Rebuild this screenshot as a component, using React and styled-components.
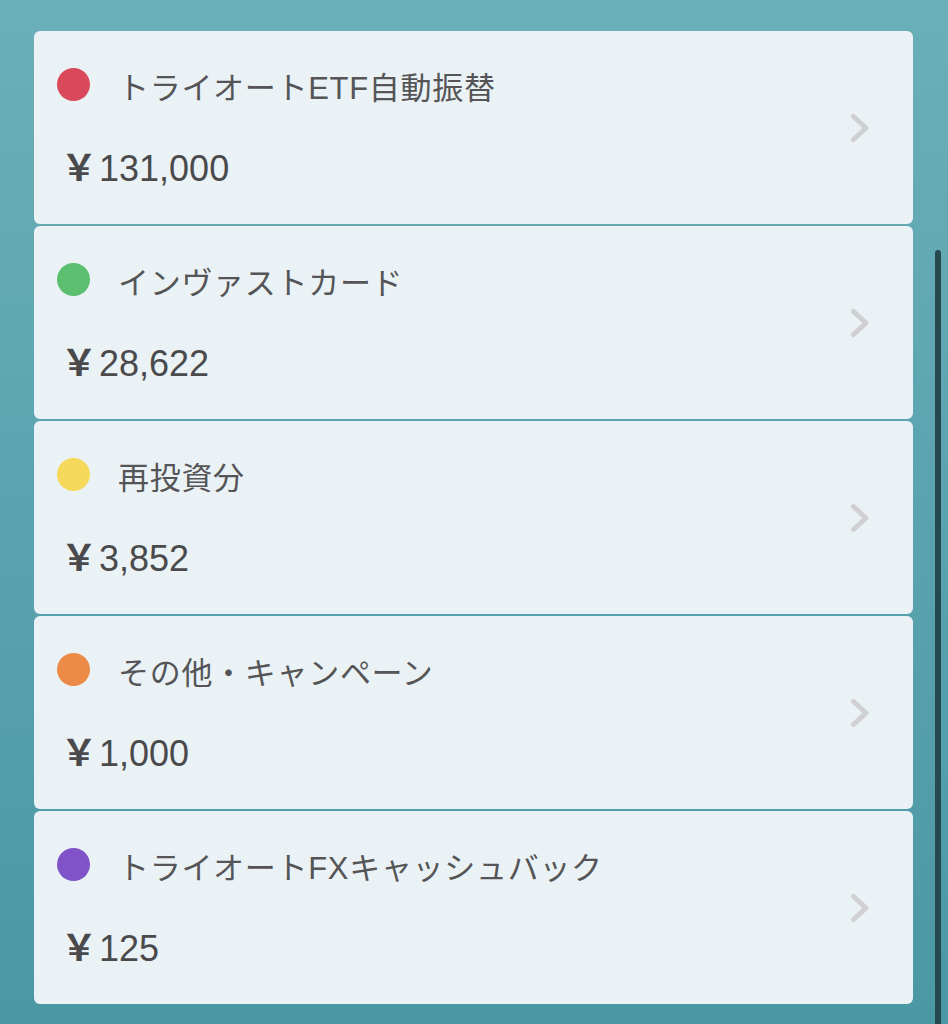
import styled, { createGlobalStyle } from "styled-components";

const GlobalStyle = createGlobalStyle`
  body {
    margin: 0;
    font-family: "Liberation Sans", "Noto Sans CJK JP", sans-serif;
  }
`

const items = [
  { name: "トライオートETF自動振替", amount: "131,000", color: "#d9485b" },
  { name: "インヴァストカード", amount: "28,622", color: "#5cbf6f" },
  { name: "再投資分", amount: "3,852", color: "#f6d85b" },
  { name: "その他・キャンペーン", amount: "1,000", color: "#ec8b47" },
  { name: "トライオートFXキャッシュバック", amount: "125", color: "#8153c8" },
]

const Chevron = () => (
  <svg width="20" height="30" viewBox="0 0 20 30">
    <polyline
      points="3.5,3.5 16,15 3.5,26.5"
      fill="none"
      stroke="#d0d0d2"
      strokeWidth="5"
      strokeLinecap="round"
      strokeLinejoin="round"
    />
  </svg>
)

const App = () => {
  return (
    <Page>
      <GlobalStyle />
      <List>
        {items.map((item) => (
          <Card key={item.name}>
            <Body>
              <Header>
                <Dot color={item.color} />
                <Title>{item.name}</Title>
              </Header>
              <Amount>
                <Yen>￥</Yen>
                {item.amount}
              </Amount>
            </Body>
            <Chevron />
          </Card>
        ))}
      </List>
      <ScrollBar />
    </Page>
  )
}

const Page = styled.div`
  position: relative;
  min-height: 1024px;
  box-sizing: border-box;
  padding: 31px 35px 0 34px;
  background: linear-gradient(to bottom, #6aafb9, #4a98a4);
  overflow: hidden;
`

const List = styled.div`
  display: flex;
  flex-direction: column;
  gap: 2px;
`

const Card = styled.div`
  height: 193px;
  box-sizing: border-box;
  display: flex;
  align-items: center;
  padding: 0 43px 0 23px;
  background: #eaf2f5;
  border-radius: 6px;
`

const Body = styled.div`
  flex: 1;
  display: flex;
  flex-direction: column;
  align-self: flex-start;
  padding-top: 37px;
`

const Header = styled.div`
  display: flex;
  align-items: flex-start;
  height: 40px;
`

const Dot = styled.span`
  width: 33px;
  height: 33px;
  border-radius: 50%;
  background: ${(p) => p.color};
  flex-shrink: 0;
`

const Title = styled.span`
  margin: 3px 0 0 28px;
  font-size: 31px;
  line-height: 36px;
  letter-spacing: 0.7px;
  color: #555557;
`

const Amount = styled.div`
  margin-top: 37px;
  padding-left: 4px;
  font-size: 36px;
  line-height: 40px;
  color: #4a4a4c;
`

const Yen = styled.span`
  font-family: "Noto Sans CJK JP", sans-serif;
  font-weight: 700;
  font-size: 36px;
  margin-right: 2px;
`

const ScrollBar = styled.div`
  position: absolute;
  right: 7px;
  top: 250px;
  bottom: -10px;
  width: 6px;
  border-radius: 3px;
  background: #25494f;
`

export default App;
